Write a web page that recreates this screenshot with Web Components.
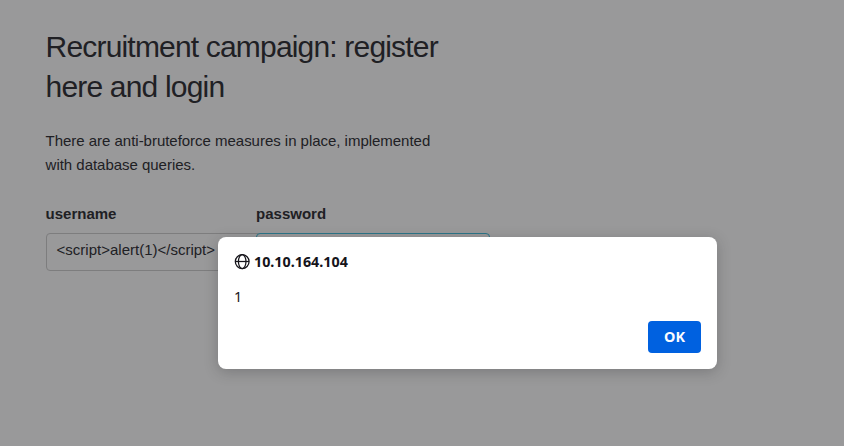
<!DOCTYPE html>
<html lang="en"><head><meta charset="utf-8"><title>Recruitment campaign</title>
<style>html,body{margin:0;height:100%;overflow:hidden;background:#99999a}</style></head>
<body><recruit-page></recruit-page>
<script>
const define = (name, html) => customElements.define(name, class extends HTMLElement {
  constructor() {
    super();
    this.attachShadow({mode: 'open'}).innerHTML = html;
    for (const el of this.shadowRoot.querySelectorAll('[data-from]'))
      el.textContent = this.getAttribute(el.dataset.from) || '';
  }
});
define('form-field', `<style>
:host{display:block;width:210.5px;font-size:15px}
.label{font-weight:700;line-height:24px;margin-bottom:7px}
.box{box-sizing:border-box;width:234px;height:38px;border:1px solid var(--edge,#7d7d7e);border-radius:4px;padding:4px 10px 0;line-height:24px;background:#99999a;white-space:nowrap}
</style><div class="label"><slot></slot></div><div class="box"><span data-from="value"></span></div>`);
define('action-button', `<style>
:host{display:flex;align-items:center;justify-content:center;width:53px;height:32px;border-radius:4px;background:#0061e0;color:#fbfbfe;font:700 14.4px/20px "Noto Sans",sans-serif}
</style><slot></slot>`);
define('globe-icon', `<style>:host,svg{display:block;width:16px;height:16px}</style>
<svg viewBox="0 0 16 16" fill="none" stroke="#15141a" stroke-width="1.25"><circle cx="8.2" cy="7.6" r="6.9"/><ellipse cx="8.2" cy="7.6" rx="3.8" ry="6.9"/><path d="M1.3 7.5h13.8"/></svg>`);
define('alert-dialog', `<style>
:host{display:flex;flex-direction:column;box-sizing:border-box;width:499px;height:132px;padding:16px;border-radius:8px;background:#fff;color:#15141a;font:14.3px/20px "Noto Sans",sans-serif;box-shadow:0 3px 14px rgba(30,30,36,.25)}
header{display:flex;align-items:center;gap:4px;height:18px;font-weight:700}
.message{margin-top:16px;height:20px}
footer{display:flex;justify-content:flex-end;margin-top:14px}
</style><header><globe-icon></globe-icon><span data-from="origin"></span></header>
<div class="message"><slot></slot></div><footer><action-button>OK</action-button></footer>`);
define('recruit-page', `<style>
:host{display:block;position:relative;box-sizing:border-box;height:446px;padding:27px 45.6px 0;color:#202024;font-family:"Liberation Sans",Arial,sans-serif}
h1{margin:0;font-size:30px;line-height:40px;font-weight:400;letter-spacing:-.82px}
p{margin:22px 0 25px;font-size:15px;line-height:24px;letter-spacing:-.025px}
.fields{display:flex}
.focus{--edge:#2b7588}
alert-dialog{position:absolute;left:218px;top:237px}
</style><h1>Recruitment campaign: register<br>here and login</h1>
<p>There are anti-bruteforce measures in place, implemented<br>with database queries.</p>
<div class="fields"><form-field value="&lt;script&gt;alert(1)&lt;/script&gt;">username</form-field><form-field class="focus">password</form-field></div>
<alert-dialog origin="10.10.164.104">1</alert-dialog>`);
</script></body></html>
